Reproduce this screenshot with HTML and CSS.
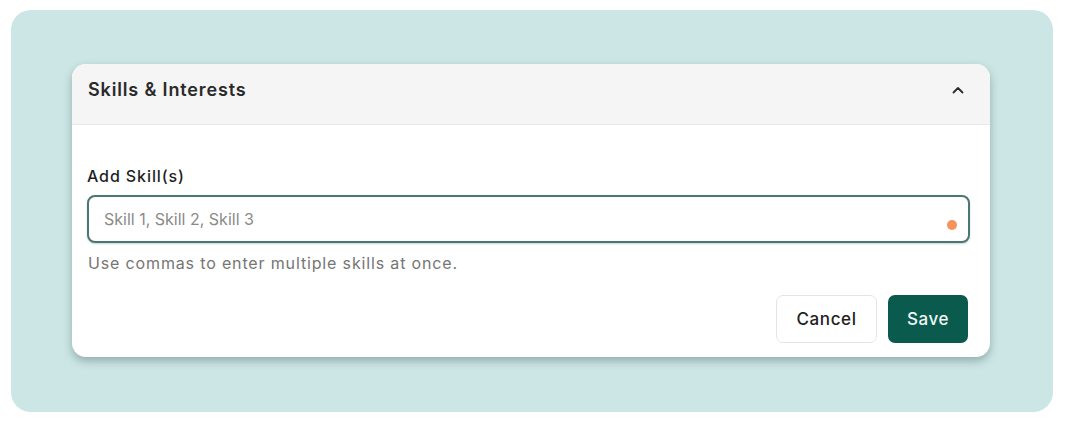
FILE: index.html
```html
<!DOCTYPE html>
<html lang="en">
<head>
    <meta charset="UTF-8">
    <title>Skills &amp; Interests</title>
    <link rel="stylesheet" href="styles.css">
</head>
<body>
    <div class="frame">
        <div class="card">
            <div class="card-header">
                <h2 class="card-title">Skills &amp; Interests</h2>
                <svg class="chevron" width="14" height="14" viewBox="0 0 14 14">
                    <path d="M2.5 9.5 L7 5 L11.5 9.5" fill="none" stroke="#2b2b2b" stroke-width="1.8" stroke-linecap="round" stroke-linejoin="round"/>
                </svg>
            </div>
            <div class="card-body">
                <label class="field-label" for="skills">Add Skill(s)</label>
                <div class="input-wrap">
                    <input class="field-input" id="skills" type="text" placeholder="Skill 1, Skill 2, Skill 3">
                    <span class="dot"></span>
                </div>
                <p class="hint">Use commas to enter multiple skills at once.</p>
                <div class="actions">
                    <button class="btn btn-cancel">Cancel</button>
                    <button class="btn btn-save">Save</button>
                </div>
            </div>
        </div>
    </div>
</body>
</html>
```

FILE: styles.css
```css
body {
    margin: 0;
    padding: 10px 13px 13px 11px;
    background: #ffffff;
    font-family: 'Inter', 'Open Sans', sans-serif;
    color: #222;
}

.frame {
    background-color: #cbe6e5;
    border-radius: 20px;
    padding: 54px 63px 55px 61px;
}

.card {
    background: #fff;
    border-radius: 14px;
    box-shadow: 0 4px 8px rgba(40, 70, 68, 0.35);
    overflow: hidden;
}

.card-header {
    display: flex;
    justify-content: space-between;
    align-items: center;
    height: 51px;
    padding: 0 25px 9px 16px;
    background-color: #f5f5f5;
    border-bottom: 1px solid #ebe8e6;
}

.card-title {
    margin: 0;
    font-size: 18px;
    font-weight: 600;
    color: #2a2a2a;
    letter-spacing: 0.85px;
}

.chevron {
    display: block;
}

.card-body {
    padding: 41px 20px 14px 15px;
}

.field-label {
    display: block;
    font-size: 16px;
    font-weight: 500;
    color: #1f1f1f;
    letter-spacing: 0.9px;
    margin-bottom: 9px;
}

.input-wrap {
    position: relative;
}

.field-input {
    display: block;
    width: 100%;
    box-sizing: border-box;
    height: 48px;
    padding: 0 15px;
    border: 2px solid #4a7773;
    border-radius: 8px;
    box-shadow: 0 1px 2px rgba(40, 80, 76, 0.25);
    font-family: inherit;
    font-size: 16px;
    color: #333;
    outline: none;
}

.field-input::placeholder {
    color: #8a8a8a;
}

.dot {
    position: absolute;
    right: 13px;
    top: 25px;
    width: 10px;
    height: 10px;
    border-radius: 50%;
    background-color: #f5935a;
}

.hint {
    margin: 10px 0 0 1px;
    font-size: 16px;
    color: #757575;
    letter-spacing: 0.85px;
}

.actions {
    display: flex;
    justify-content: flex-end;
    gap: 11px;
    margin-top: 22px;
    padding-right: 2px;
}

.btn {
    height: 48px;
    border-radius: 7px;
    font-family: inherit;
    font-size: 17px;
    font-weight: 500;
    letter-spacing: 0.6px;
    cursor: pointer;
}

.btn-cancel {
    width: 101px;
    background: #fff;
    border: 1px solid #e4e4e4;
    color: #222;
}

.btn-save {
    width: 80px;
    background-color: #0b5a4e;
    border: none;
    color: #eef7f5;
}
```
